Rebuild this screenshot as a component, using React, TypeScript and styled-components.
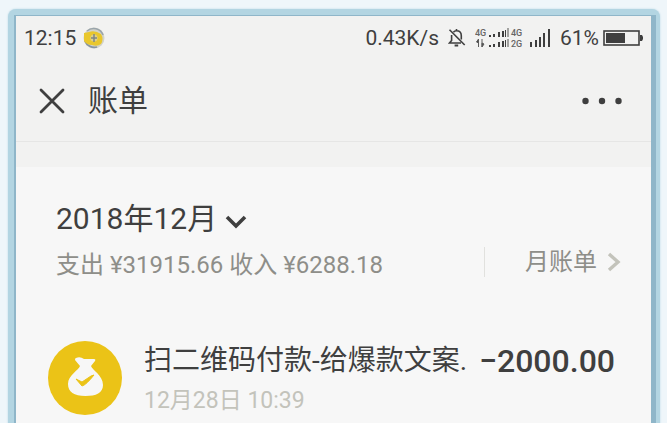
import React from "react";
import styled, { createGlobalStyle } from "styled-components";

const ink = "#3f3f3f";
const muted = "#8e8e89";
const faint = "#c3c3bb";

const GlobalStyle = createGlobalStyle`
  * { box-sizing: border-box; }
  body {
    margin: 0;
    background: #eff6fa;
    color: ${ink};
    font-family: Roboto, "Noto Sans CJK SC", sans-serif;
  }
  button { font: inherit; color: inherit; background: none; border: 0; padding: 0; cursor: pointer; }
  h1, h2, h3, p { margin: 0; font-weight: 400; }
  svg { display: block; flex: none; }
`;

const Page = styled.div`
  min-height: 100vh;
  display: flex;
  flex-direction: column;
  padding: 9px 7px 0 8px;
`;

const Frame = styled.div`
  flex: 1;
  display: flex;
  flex-direction: column;
  padding: 6px 4px 0 6px;
  background: #b3d5e2;
  border-radius: 8px 8px 0 0;
  box-shadow: 0 0 2px #b3d5e2;
`;

const Screen = styled.main`
  flex: 1;
  background: #f7f7f7;
  border: solid #8fb6c9;
  border-width: 1px 5px 0 2px;
`;

const TopArea = styled.header`
  background: #f2f2f1;
  padding-bottom: 25px;
`;

const StatusBar = styled.div`
  display: flex;
  align-items: center;
  justify-content: space-between;
  height: 44px;
  padding: 0 7px 0 8px;
  font-size: 21px;
  line-height: 24px;
`;

const StatusGroup = styled.div<{ $gap: number }>`
  display: flex;
  align-items: center;
  gap: ${(p) => p.$gap}px;
`;

const NavBar = styled.nav`
  display: flex;
  align-items: center;
  height: 82px;
  padding: 0 28px 0 22px;
  border-bottom: 1px solid #e6e6e5;
`;

const IconButton = styled.button`
  display: flex;
  align-items: center;
`;

const Title = styled.h1`
  flex: 1;
  padding-left: 22px;
  font-size: 30px;
  line-height: 40px;
`;

const Summary = styled.section`
  display: flex;
  align-items: flex-end;
  justify-content: space-between;
  padding: 32px 30px 0 40px;
`;

const MonthButton = styled.button`
  display: flex;
  align-items: center;
  gap: 8px;
  font-size: 30px;
  line-height: 40px;

  svg { margin-top: 6px; }
`;

const Totals = styled.p`
  margin-top: 8px;
  font-size: 24px;
  line-height: 36px;
  color: ${muted};
`;

const MonthlyLink = styled.a`
  display: flex;
  align-items: center;
  gap: 10px;
  margin-bottom: 6px;
  padding-left: 40px;
  border-left: 1px solid #e1e1de;
  font-size: 24px;
  line-height: 30px;
  color: ${muted};
  text-decoration: none;
`;

const Records = styled.ul`
  list-style: none;
  margin: 0;
  padding: 58px 36px 8px 32px;
`;

const Record = styled.li`
  display: flex;
  align-items: flex-start;
  gap: 22px;
`;

const RecordText = styled.div`
  flex: 1;
  min-width: 0;
`;

const RecordHead = styled.div`
  display: flex;
  align-items: center;
  justify-content: space-between;
  line-height: 40px;
`;

const Payee = styled.h3`
  font-size: 28px;
  white-space: nowrap;
`;

const Amount = styled.span`
  font-size: 32px;
  font-weight: 500;
  white-space: nowrap;
`;

const When = styled.time`
  display: block;
  margin-top: 3px;
  font-size: 23px;
  line-height: 34px;
  color: ${faint};
`;

const Coin = () => (
  <svg width="22" height="22" viewBox="0 0 22 22" aria-hidden="true">
    <circle cx="11" cy="11" r="10.5" fill="#d3d3c8" />
    <path d="M4 4 A10 10 0 0 1 20 8" fill="none" stroke="#9aa5ac" strokeWidth="1.6" />
    <path d="M2 14 A10 10 0 0 0 14 20" fill="none" stroke="#8795a0" strokeWidth="1.8" />
    <path d="M1 6 L6 5 Q12 3 18 7 Q21 12 18 17 Q14 20 9 18 Q4 18 1 14Z" fill="#e9c72d" />
    <circle cx="11" cy="11" r="3.6" fill="#ddd08a" />
    <path d="M11 7v8M8 11h6" stroke="#7f8585" strokeWidth="1.5" />
  </svg>
);

const Muted = () => (
  <svg width="18" height="20" viewBox="0 0 18 20" fill="none" stroke={ink} strokeWidth="1.6" aria-hidden="true">
    <path d="M5.4 4.2C6.2 3.2 7.2 2.8 8.5 2.8c3 0 4.8 2.2 4.8 5v3.6M3.6 7v5.4L1.5 15H13M8.5 1v2" />
    <path d="M6.6 17.5h3.6" strokeWidth="2" />
    <path d="M1.5 1.8 16.7 17" />
  </svg>
);

const DualSignal = () => (
  <svg width="49" height="20" viewBox="0 0 49 20" fill={ink} aria-hidden="true">
    <g fontFamily="Roboto, sans-serif" fontSize="9" fontWeight="500" fill="#666">
      <text x="0" y="8">4G</text>
      <text x="36" y="8">4G</text>
      <text x="36" y="19">2G</text>
    </g>
    <path d="M3.500 11v8M1.500 14l2-3v4zM7 11v8M9 16 7 19v-4z" stroke="#5c5c5c" strokeWidth="1" />
    <path d="M14 7h2v2h-2zM18 6h2v3h-2zM23 4h2v5h-2zM27 3h2v6h-2z" />
    <path d="M14 17h2v2h-2zM18 16h2v3h-2zM23 14h2v5h-2zM27 13h2v6h-2z" />
    <path d="M30 2h1v7H30zM30 12h1v7H30z" />
    <path d="M32 0h2v9h-2zM32 11h2v8h-2z" fill="#a2a2a0" />
  </svg>
);

const Signal = () => (
  <svg width="21" height="18" viewBox="0 0 21 18" fill={ink} aria-hidden="true">
    <path d="M0 13h2v5H0zM5 11h2v7H5zM9 8h2v10H9zM13 4h2v14h-2zM18 0h2v18h-2z" />
  </svg>
);

const Battery = () => (
  <svg width="41" height="17" viewBox="0 0 41 17" aria-hidden="true">
    <rect x="1" y="1" width="35" height="14" fill="none" stroke={ink} strokeWidth="1.6" />
    <rect x="3" y="3" width="19" height="10" fill={ink} />
    <path d="M37 5h2l1 2v2l-1 2h-2z" fill={ink} />
  </svg>
);

const Close = () => (
  <svg width="28" height="28" viewBox="0 0 28 28" stroke={ink} strokeWidth="2.8" strokeLinecap="round" aria-hidden="true">
    <path d="M3 3 25 25M25 3 3 25" />
  </svg>
);

const More = () => (
  <svg width="42" height="8" viewBox="0 0 42 8" fill={ink} aria-hidden="true">
    <circle cx="4.500" cy="4" r="3.200" />
    <circle cx="21" cy="4" r="3.200" />
    <circle cx="37.500" cy="4" r="3.200" />
  </svg>
);

const ChevronDown = () => (
  <svg width="22" height="14" viewBox="0 0 22 14" fill="none" stroke={ink} strokeWidth="3.6" aria-hidden="true">
    <path d="M2 2 11 11 20 2" />
  </svg>
);

const ChevronRight = () => (
  <svg width="14" height="20" viewBox="0 0 14 20" fill="none" stroke={faint} strokeWidth="3.4" aria-hidden="true">
    <path d="M2 2 11 10 2 18" />
  </svg>
);

const MoneyBag = () => (
  <svg width="74" height="74" viewBox="0 0 74 74" aria-hidden="true">
    <circle cx="37" cy="37" r="37" fill="#ebc317" />
    <path
      d="M28 17Q32 15 36 18Q42 18 46 18Q48 18 47 20L43 25H32L27 19Q27 17 28 17Z M32 25H43C44 29 55 34 55 44C55 52 48 55 37.500 55C26 55 20 51 20 43C20 34 31 29 32 25Z"
      fill="#f7f7f7"
    />
    <path d="M28 38 34 41 43 35 46 34Q38 44 34 45Z" fill="#ebc317" stroke="#ebc317" strokeWidth="1" />
  </svg>
);

const records = [
  { payee: "扫二维码付款-给爆款文案.", when: "12月28日 10:39", iso: "2018-12-28T10:39", amount: "−2000.00" },
];

export default function App() {
  return (
    <>
      <GlobalStyle />
      <Page>
        <Frame>
          <Screen>
            <TopArea>
              <StatusBar>
                <StatusGroup $gap={7}>
                  <span>12:15</span>
                  <Coin />
                </StatusGroup>
                <StatusGroup $gap={9}>
                  <span>0.43K/s</span>
                  <Muted />
                  <StatusGroup $gap={6}>
                    <DualSignal />
                    <Signal />
                  </StatusGroup>
                  <StatusGroup $gap={4}>
                    <span>61%</span>
                    <Battery />
                  </StatusGroup>
                </StatusGroup>
              </StatusBar>
              <NavBar>
                <IconButton type="button" aria-label="关闭"><Close /></IconButton>
                <Title>账单</Title>
                <IconButton type="button" aria-label="更多"><More /></IconButton>
              </NavBar>
            </TopArea>
            <Summary>
              <div>
                <h2>
                  <MonthButton type="button">2018年12月<ChevronDown /></MonthButton>
                </h2>
                <Totals>支出 ¥31915.66 收入 ¥6288.18</Totals>
              </div>
              <MonthlyLink href="#monthly">月账单<ChevronRight /></MonthlyLink>
            </Summary>
            <Records>
              {records.map((r) => (
                <Record key={r.iso}>
                  <MoneyBag />
                  <RecordText>
                    <RecordHead>
                      <Payee>{r.payee}</Payee>
                      <Amount>{r.amount}</Amount>
                    </RecordHead>
                    <When dateTime={r.iso}>{r.when}</When>
                  </RecordText>
                </Record>
              ))}
            </Records>
          </Screen>
        </Frame>
      </Page>
    </>
  );
}
